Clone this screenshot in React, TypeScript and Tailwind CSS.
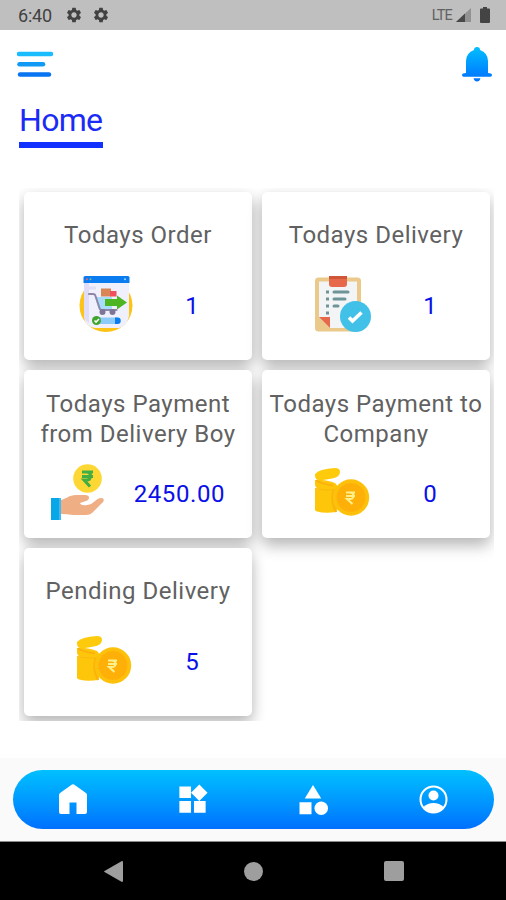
import type { ReactNode } from "react";
import { MdCategory, MdSettings, MdWidgets } from "react-icons/md";

interface IProps {
  title: ReactNode;
  value: string;
  icon: ReactNode;
}

const OrderIcon = () => (
  <svg width="56" height="56" viewBox="0 0 56 56">
    <circle cx="29" cy="29.5" r="26.5" fill="#fcc419" />
    <path d="M7 5h45v35q-2 10-10 12H18Q7 50 7 40z" fill="#f0effc" />
    <path d="M7 5h5v42q-5-3-5-8z" fill="#dedcf8" />
    <path d="M6.500 1.500q0-1.500 1.500-1.500h43q1.500 0 1.500 1.500V7h-46z" fill="#0a7cf0" />
    <circle cx="10" cy="3.300" r="1" fill="#e5637a" />
    <circle cx="13.500" cy="3.300" r="1" fill="#76b7a0" />
    <circle cx="48" cy="3.300" r="1" fill="#9fd4ff" />
    <path d="M12 12h7" stroke="#e2dff2" strokeWidth="3" />
    <path d="M18 21h17v13H22z" fill="#a8dcfb" />
    <rect x="24" y="12.500" width="10" height="8" fill="#d98555" />
    <rect x="33" y="15" width="6.500" height="5.500" fill="#f0505c" />
    <path d="M12 18h4q2 0 2.500 2l4 12q.5 2 2 2h15" fill="none" stroke="#8f86a8" strokeWidth="2" strokeLinecap="round" />
    <circle cx="25.500" cy="36" r="3" fill="#7d7595" />
    <circle cx="35.500" cy="36" r="3" fill="#7d7595" />
    <path d="M28 23h12v-3.500l10 7-10 7V30H28z" fill="#4db521" />
    <rect x="19" y="41.500" width="24" height="6.500" rx="3.200" fill="#8ccafa" />
    <path d="M38 41.500h2.500a3.200 3.200 0 0 1 0 6.500H38z" fill="#0a7cf0" />
    <circle cx="19.500" cy="44.500" r="4.500" fill="#3fa52e" />
    <path d="m17.500 44.500 1.500 1.600 3-3.100" fill="none" stroke="#fff" strokeWidth="1.500" />
  </svg>
);

const ClipboardIcon = () => (
  <svg width="56" height="56" viewBox="0 0 56 56">
    <rect x="0" y="1.500" width="46" height="54" rx="3.500" fill="#ebc98a" />
    <path d="M4 5.500h38V52H15L4 41z" fill="#f3f4f6" />
    <path d="M4 41h11v11z" fill="#e5694a" />
    <path d="M14 0h18v8q0 3-3 3H17q-3 0-3-3z" fill="#e5694a" />
    <path d="M14 0h18v3H14z" fill="#cf5639" />
    <path d="M11 16h3M11 23h3M11 30h3M11 37h3" stroke="#6e9497" strokeWidth="3.200" />
    <path d="M19 16h14M19 23h11M19 30h4" stroke="#6e9497" strokeWidth="3" strokeLinecap="round" />
    <circle cx="40.500" cy="40.500" r="15.500" fill="#41c0e8" />
    <path d="m34 41.500 3.500 3.500 9-8.500" fill="none" stroke="#fff" strokeWidth="3.600" />
  </svg>
);

const HandIcon = () => (
  <svg width="56" height="56" viewBox="0 0 56 56">
    <circle cx="36.500" cy="14.500" r="14.300" fill="#fdd835" />
    <path d="M31 8h11M31 12.500h11M32 8h3.500q4 0 4 4t-4 4H33l6 6.500" fill="none" stroke="#41ae45" strokeWidth="3" />
    <path d="M10 36c5-1 8-5 15-5h9q4 0 4 2.500T35 37l-6 2q1 3 7 2c8-1 7-6 14-7 4 0 3 3.500 1 5L41 49q-2 2-6 2H22q-6-1-12-1z" fill="#f0ae84" />
    <rect x="0" y="34" width="10" height="22" fill="#08a8e8" />
    <path d="M8 34h2v22H8z" fill="#43b9f2" />
  </svg>
);

const CoinsIcon = () => (
  <svg width="56" height="56" viewBox="0 0 56 56">
    <path d="M0 25q9-3 20 0l2 3v19.500q-10 2.500-20 0-2-.5-2-2z" fill="#fec60a" />
    <path d="M0 10q4-5 20-6 5 0 5 4 0 5-8 6.500-8 1.500-13 2-4-1-4-5z" fill="#fecb0c" />
    <path d="M0 16q8-1 20 3l6 7q-14 2-24-2-2-1-2-4z" fill="#fec60a" />
    <path d="M1 16.500q6 3.500 17 5" fill="none" stroke="#fbb00e" strokeWidth="2" />
    <path d="M0 24.500q9 2 20 1.500" fill="none" stroke="#fbb812" strokeWidth="1" />
    <path d="M19 26q-4 10 2 22" fill="none" stroke="#fbb40b" strokeWidth="2.500" />
    <circle cx="36" cy="33.500" r="18.200" fill="#fec10b" />
    <circle cx="36" cy="33.500" r="14.500" fill="#ffb008" />
    <path d="M31 28.500h9M31 32h9M32 28.500h2.500q4 0 4 3.300t-4 3.200H32l5.500 5" fill="none" stroke="#fff08c" strokeWidth="2" />
  </svg>
);

const cards: IProps[] = [
  { title: "Todays Order", value: "1", icon: <OrderIcon /> },
  { title: "Todays Delivery", value: "1", icon: <ClipboardIcon /> },
  { title: <>Todays Payment<br />from Delivery Boy</>, value: "2450.00", icon: <HandIcon /> },
  { title: <>Todays Payment to<br />Company</>, value: "0", icon: <CoinsIcon /> },
  { title: "Pending Delivery", value: "5", icon: <CoinsIcon /> },
];

const StatCard = ({ title, value, icon }: IProps) => {
  return (
    <div className="h-[168px] rounded-[5px] bg-white flex flex-col pb-px shadow-[0_9px_15px_rgba(0,0,0,0.2),0_3px_14px_rgba(0,0,0,0.12)]">
      <h2 className={`flex-1 flex items-center justify-center text-center text-[24px] leading-[30px] tracking-[0.5px] text-[#616161] whitespace-nowrap ${typeof title === "string" ? "pt-[14px]" : "pt-[12px]"}`}>
        <span>{title}</span>
      </h2>
      <div className={`flex items-center justify-evenly ${typeof title === "string" ? "pt-[12px] pb-[27px]" : "pt-[8px] pb-[17px]"}`}>
        {icon}
        <span className="text-[24px] leading-[30px] tracking-[0.6px] text-[#0a10e8] pt-[3px]">{value}</span>
      </div>
    </div>
  );
};

const App = () => {
  return (
    <div className="w-[506px] h-[900px] overflow-hidden bg-white flex flex-col font-[Roboto,sans-serif]">
      {/* status bar */}
      <div className="h-[30px] shrink-0 bg-[#bfbfbf] flex items-center text-[#424242] pl-[18px] pr-[16px]">
        <span className="text-[18px] leading-[24px] tracking-[-0.2px] w-[47px] pt-px">6:40</span>
        <MdSettings size={18} />
        <MdSettings size={18} className="ml-[9px]" />
        <span className="ml-auto text-[14.500px] tracking-[-0.8px] text-[#616161] pt-px">LTE</span>
        <svg className="ml-[4px]" width="15" height="14" viewBox="0 0 15 14">
          <path d="M15 0v14H0z" fill="#929292" />
          <path d="M9 5.600V14H0z" fill="#484848" />
        </svg>
        <svg className="ml-[9px]" width="10" height="16" viewBox="0 0 10 16">
          <path d="M3 0h4v1.500h2q1 0 1 1V15q0 1-1 1H1q-1 0-1-1V2.500q0-1 1-1h2z" fill="#444" />
        </svg>
      </div>

      {/* header */}
      <div className="h-[68px] shrink-0 flex items-center justify-between pl-[17px] pr-[14px]">
        <svg width="37" height="27" viewBox="0 0 37 27">
          <path d="M2 3h32" stroke="#19bdfd" strokeWidth="4.500" strokeLinecap="round" />
          <path d="M2.500 13.300h23.500" stroke="#1099f5" strokeWidth="4.500" strokeLinecap="round" />
          <path d="M3 23.600h29" stroke="#0874f1" strokeWidth="4.500" strokeLinecap="round" />
        </svg>
        <svg width="30" height="35" viewBox="0 0 30 35">
          <defs>
            <linearGradient id="bell" x1="0" y1="0" x2="0" y2="1">
              <stop offset="0" stopColor="#00bfff" />
              <stop offset="1" stopColor="#0070ff" />
            </linearGradient>
          </defs>
          <path
            d="M15 0q3 0 3 3 8 3 8 11v12l3 .5q1 .5 1 1.500 0 1.800-1.500 1.800h-27Q0 29.800 0 28q0-1 1-1.500l3-.5V14Q4 6 12 3q0-3 3-3zM11.500 31.300h7q-1 3.200-3.500 3.200t-3.500-3.200z"
            fill="url(#bell)"
          />
        </svg>
      </div>

      {/* page title */}
      <div className="pl-[19px] h-[90px] shrink-0 flex items-start">
        <h1 className="w-[84px] h-[50px] pt-[4px] border-b-[6px] border-[#1230ff] text-[32px] leading-[37px] tracking-[-0.7px] text-[#1b2bf5] whitespace-nowrap">
          Home
        </h1>
      </div>

      {/* cards */}
      <div className="ml-[19px] w-[475px] h-[533px] shrink-0 overflow-hidden pl-[5px] pr-[4px] pt-[4px]">
        <div className="grid grid-cols-2 gap-[10px]">
          {cards.map((card, i) => (
            <StatCard key={i} {...card} />
          ))}
        </div>
      </div>

      {/* bottom tabs */}
      <div className="mt-auto h-[84px] shrink-0 bg-[#fafafa] border-b border-[#8a8a8a] pt-[12px] px-[12.500px]">
        <div className="h-[59px] rounded-full bg-linear-to-b from-[#00c0ff] to-[#0070ff] grid grid-cols-4 place-items-center text-white">
          <svg width="28" height="31" viewBox="0 0 28 31" fill="currentColor">
            <path d="M13 .5q1-.7 2 0l12 8.500q1 .8 1 2V28q0 2-2 2h-8.500V18.500h-7V30H2q-2 0-2-2V11q0-1.200 1-2z" />
          </svg>
          <MdWidgets size={35} />
          <MdCategory size={36} />
          <svg width="29" height="29" viewBox="0 0 29 29">
            <circle cx="14.500" cy="14.500" r="13" fill="none" stroke="currentColor" strokeWidth="2" />
            <circle cx="14.500" cy="10.500" r="5" fill="currentColor" />
            <path d="M4.500 22q4-4 10-4t10 4q-4 5.500-10 5.500T4.500 22z" fill="currentColor" />
          </svg>
        </div>
      </div>

      {/* android navigation */}
      <div className="h-[58px] shrink-0 bg-black flex items-center justify-center gap-[121px] pl-px text-[#9e9e9e]">
        <svg width="19" height="21" viewBox="0 0 19 21" fill="currentColor">
          <path d="M17.500.2q1.500-.5 1.500 1v18.600q0 1.500-1.500 1L.5 11q-.8-.5 0-1z" />
        </svg>
        <div className="size-[19px] rounded-full bg-[#9e9e9e]" />
        <div className="size-[20px] rounded-[2px] bg-[#9e9e9e]" />
      </div>
    </div>
  );
};

export default App;
